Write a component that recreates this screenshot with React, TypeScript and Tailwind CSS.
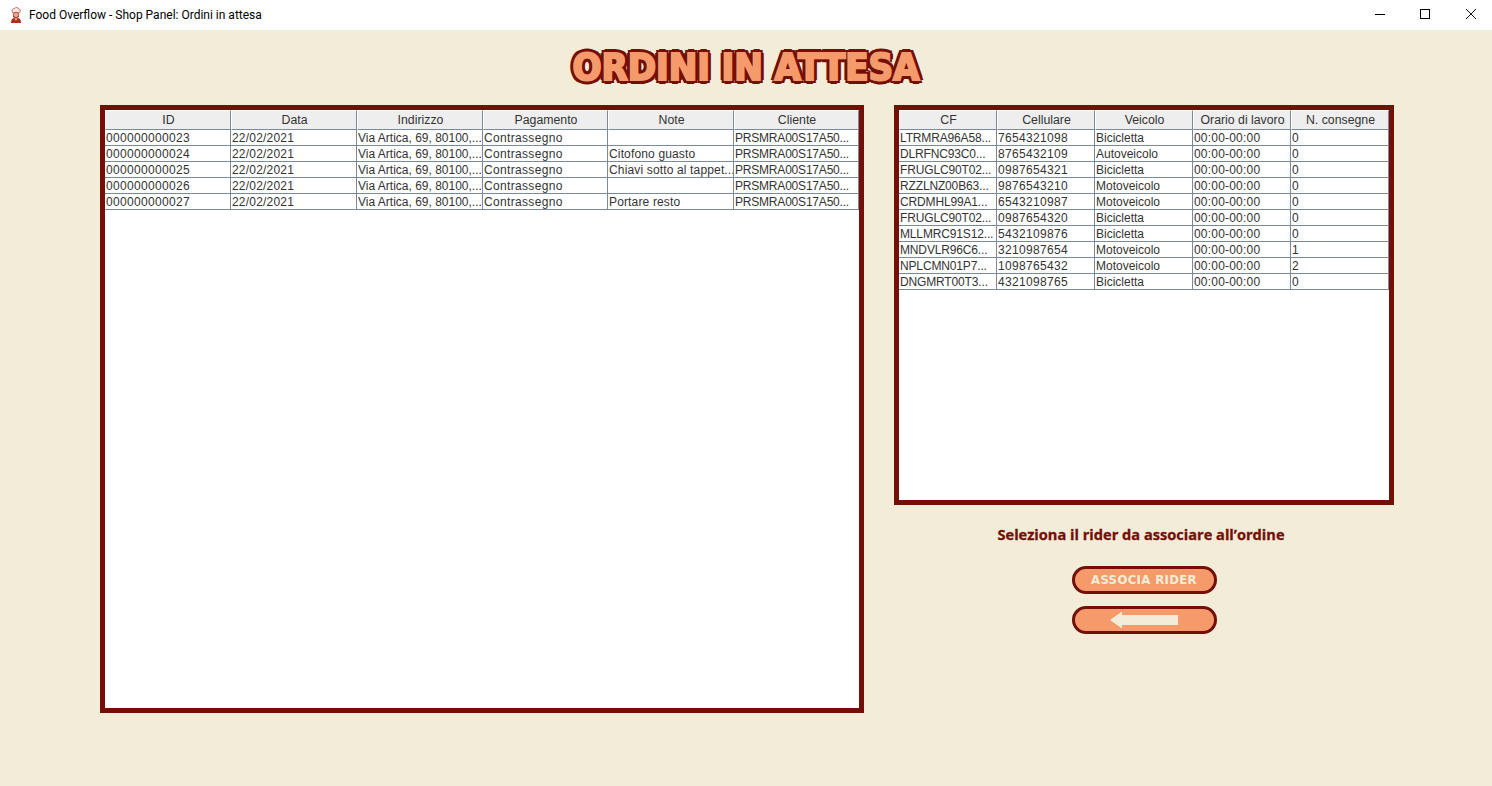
const orders = [
  ["000000000023", "22/02/2021", "Via Artica, 69, 80100,...", "Contrassegno", "", "PRSMRA00S17A50..."],
  ["000000000024", "22/02/2021", "Via Artica, 69, 80100,...", "Contrassegno", "Citofono guasto", "PRSMRA00S17A50..."],
  ["000000000025", "22/02/2021", "Via Artica, 69, 80100,...", "Contrassegno", "Chiavi sotto al tappet...", "PRSMRA00S17A50..."],
  ["000000000026", "22/02/2021", "Via Artica, 69, 80100,...", "Contrassegno", "", "PRSMRA00S17A50..."],
  ["000000000027", "22/02/2021", "Via Artica, 69, 80100,...", "Contrassegno", "Portare resto", "PRSMRA00S17A50..."],
];

const riders = [
  ["LTRMRA96A58...", "7654321098", "Bicicletta", "00:00-00:00", "0"],
  ["DLRFNC93C0...", "8765432109", "Autoveicolo", "00:00-00:00", "0"],
  ["FRUGLC90T02...", "0987654321", "Bicicletta", "00:00-00:00", "0"],
  ["RZZLNZ00B63...", "9876543210", "Motoveicolo", "00:00-00:00", "0"],
  ["CRDMHL99A1...", "6543210987", "Motoveicolo", "00:00-00:00", "0"],
  ["FRUGLC90T02...", "0987654320", "Bicicletta", "00:00-00:00", "0"],
  ["MLLMRC91S12...", "5432109876", "Bicicletta", "00:00-00:00", "0"],
  ["MNDVLR96C6...", "3210987654", "Motoveicolo", "00:00-00:00", "1"],
  ["NPLCMN01P7...", "1098765432", "Motoveicolo", "00:00-00:00", "2"],
  ["DNGMRT00T3...", "4321098765", "Bicicletta", "00:00-00:00", "0"],
];

const orderTracking = [
  "tracking-[0.33px]",
  "tracking-[0.2px]",
  "tracking-normal",
  "tracking-[0.33px]",
  "tracking-[0.15px]",
  "tracking-[-0.2px]",
];
const riderTracking = [
  "tracking-[-0.15px]",
  "tracking-[0.33px]",
  "tracking-normal",
  "tracking-[0.2px]",
  "tracking-normal",
];

function HeaderCell({ label }: { label: string }) {
  return (
    <div className="h-5 pt-px pl-px flex items-center justify-center text-[12.3px] bg-[#eeeeee] border-t border-l border-t-white border-l-white border-r border-b border-r-[#7a8a99] border-b-[#7a8a99]">
      {label}
    </div>
  );
}

function Cell({ value, tracking }: { value: string; tracking: string }) {
  return (
    <div className={`h-4 pl-px leading-[17px] whitespace-nowrap overflow-hidden border-r border-b border-[#7a8a99] ${tracking}`}>
      {value}
    </div>
  );
}

function ChefIcon() {
  return (
    <svg width="12" height="17" viewBox="0 0 12 17">
      <path d="M3 6 C1 4 2.5 1.5 4.5 1.5 C5.5 0 8 0.2 8.7 1.8 C10.5 2 11 4.5 9.2 6Z" fill="#f6e9e4" stroke="#b5493a" strokeWidth="0.8" />
      <circle cx="6" cy="8" r="2.8" fill="#e9a98c" stroke="#a02c1a" strokeWidth="0.7" />
      <path d="M1 16 C1 12 3 10.5 6 10.5 C9 10.5 11 12 11 16Z" fill="#b0301c" />
      <path d="M4 10.5 L6 13.5 L8 10.5Z" fill="#f3d6c6" />
      <path d="M3.5 9 C4.5 11.5 7.5 11.5 8.5 9" fill="none" stroke="#7a1a0e" strokeWidth="1" />
    </svg>
  );
}

export default function App() {
  return (
    <div className="w-[1492px] h-[786px] overflow-hidden bg-[#f3ecd9] font-['Liberation_Sans',sans-serif]">
      {/* Window title bar */}
      <div className="h-[30px] bg-white flex items-center">
        <div className="ml-[10px] w-[12px] h-[17px]">
          <ChefIcon />
        </div>
        <span className="ml-[7px] text-xs text-black font-['Roboto',sans-serif]">
          Food Overflow - Shop Panel: Ordini in attesa
        </span>
        <div className="ml-auto -mr-[2px] self-start flex items-center">
          <div className="w-[44px] h-[28px] flex items-center justify-center">
            <div className="w-[10px] h-px bg-black" />
          </div>
          <div className="w-[46px] h-[28px] flex items-center justify-center">
            <div className="w-[10px] h-[10px] border border-black" />
          </div>
          <div className="w-[46px] h-[28px] flex items-center justify-center">
            <svg width="12" height="12" viewBox="0 0 12 12" fill="none" stroke="#111" strokeWidth="1">
              <path d="M1 1 L11 11 M11 1 L1 11" />
            </svg>
          </div>
        </div>
      </div>

      {/* Heading */}
      <div className="h-[75px] pb-[2px] flex items-center justify-center">
        <h1 className="text-[38px] leading-none font-bold tracking-[-0.1px] text-[#f59b6b] font-['DejaVu_Sans_Condensed','DejaVu_Sans',sans-serif] [-webkit-text-stroke:2px_#f59b6b] [text-shadow:4px_0_0_#730f06,-4px_0_0_#730f06,0_4px_0_#730f06,0_-4px_0_#730f06,3px_3px_0_#730f06,-3px_3px_0_#730f06,3px_-3px_0_#730f06,-3px_-3px_0_#730f06,2px_0_0_#730f06,-2px_0_0_#730f06,0_2px_0_#730f06,0_-2px_0_#730f06]">
          ORDINI IN ATTESA
        </h1>
      </div>

      <div className="flex items-start pl-[100px] gap-[30px]">
        {/* Orders */}
        <div className="w-[764px] h-[608px] border-[5px] border-[#730f06] bg-white text-xs text-[#333333]">
          <div className="grid grid-cols-[126px_126px_126px_125px_126px_125px]">
            {["ID", "Data", "Indirizzo", "Pagamento", "Note", "Cliente"].map((h) => (
              <HeaderCell key={h} label={h} />
            ))}
            {orders.map((row, r) =>
              row.map((v, c) => <Cell key={`${r}-${c}`} value={v} tracking={orderTracking[c]} />)
            )}
          </div>
        </div>

        {/* Riders */}
        <div className="w-[500px] flex flex-col items-center">
          <div className="w-[500px] h-[400px] border-[5px] border-[#730f06] bg-white text-xs text-[#333333]">
            <div className="grid grid-cols-[98px_98px_98px_98px_98px]">
              {["CF", "Cellulare", "Veicolo", "Orario di lavoro", "N. consegne"].map((h) => (
                <HeaderCell key={h} label={h} />
              ))}
              {riders.map((row, r) =>
                row.map((v, c) => <Cell key={`${r}-${c}`} value={v} tracking={riderTracking[c]} />)
              )}
            </div>
          </div>

          <p className="mt-[19px] h-[20px] leading-[20px] text-[14.6px] font-bold text-[#730f06] font-['Open_Sans',sans-serif] [-webkit-text-stroke:0.3px_#730f06] whitespace-nowrap -translate-x-[3px]">
            Seleziona il rider da associare all’ordine
          </p>

          <button className="mt-[22px] w-[145px] h-7 rounded-full border-[3px] border-[#730f06] bg-[#f59b6b] text-[13px] font-bold text-[#f3ecd9] tracking-[0.35px] font-['DejaVu_Sans_Condensed','DejaVu_Sans',sans-serif] flex items-center justify-center">
            ASSOCIA RIDER
          </button>

          <button className="mt-3 w-[145px] h-7 rounded-full border-[3px] border-[#730f06] bg-[#f59b6b] flex items-center justify-center">
            <svg width="70" height="18" viewBox="0 0 70 18">
              <path d="M1 9 L13 0.5 L13 4 L69 4 L69 14 L13 14 L13 17.5 Z" fill="#f3ecd9" />
            </svg>
          </button>
        </div>
      </div>
    </div>
  );
}
